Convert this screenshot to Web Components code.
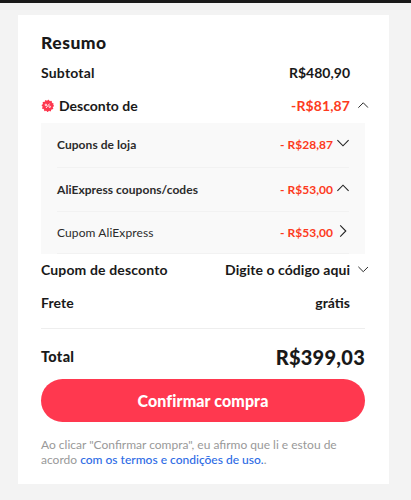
<!DOCTYPE html>
<html lang="pt-BR">
<head>
<meta charset="utf-8">
<title>Resumo</title>
<style>
  body {
    margin: 0;
    background: #f3f3f3;
    color: #191919;
    font-family: Lato, "Liberation Sans", sans-serif;
  }
</style>
</head>
<body>
<order-summary></order-summary>

<script>
const chevron = document.createElement('template')
chevron.innerHTML = `
  <style>
    :host {
      display: block;
      width: 12px;
      height: 12px;
      color: #222;
    }

    :host([direction="up"]) svg {
      transform: rotate(180deg);
    }

    :host([direction="right"]) svg {
      transform: rotate(-90deg);
    }

    svg {
      display: block;
      width: 100%;
      height: 100%;
    }
  </style>
  <svg viewBox="0 0 12 12" fill="none" stroke="currentColor" stroke-width="1.1">
    <path d="M.4 3.2 6 8.8 11.6 3.2"/>
  </svg>
`

customElements.define('chevron-icon',
  class extends HTMLElement {
    constructor () {
      super()
      this.attachShadow({ mode: 'open' }).appendChild(chevron.content.cloneNode(true))
    }
  }
)

const discountBadge = document.createElement('template')
discountBadge.innerHTML = `
  <style>
    :host {
      display: block;
      width: 13px;
      height: 13px;
    }

    svg {
      display: block;
    }
  </style>
  <svg width="13" height="13" viewBox="0 0 13 13">
    <circle cx="6.8" cy="6.8" r="5.4" fill="#fd384f"/>
    <circle cx="6.8" cy="6.8" r="5.3" fill="none" stroke="#fd384f" stroke-width="1.7" stroke-linecap="round" stroke-dasharray="0.01 2.765"/>
    <g fill="none" stroke="#fff" stroke-width=".9">
      <path d="M8.6 4.6 5 9"/>
      <circle cx="4.9" cy="5.9" r=".8"/>
      <circle cx="8.7" cy="7.7" r=".8"/>
    </g>
  </svg>
`

customElements.define('discount-badge',
  class extends HTMLElement {
    constructor () {
      super()
      this.attachShadow({ mode: 'open' }).appendChild(discountBadge.content.cloneNode(true))
    }
  }
)

const summaryRow = document.createElement('template')
summaryRow.innerHTML = `
  <style>
    :host {
      display: flex;
      align-items: center;
      height: 33px;
      font-size: 14px;
      font-weight: 700;
      line-height: 20px;
      white-space: nowrap;
    }

    .label {
      flex: 1;
      display: flex;
      align-items: center;
      gap: 5px;
      letter-spacing: var(--label-spacing, 0);
    }

    .value {
      color: var(--value-color, inherit);
      letter-spacing: var(--value-spacing, 0);
    }

    .end {
      width: 15px;
    }

    ::slotted([slot="end"]) {
      width: 10.5px;
      height: 10.5px;
      margin-left: 7.5px;
    }
  </style>
  <div class="label"><slot name="start"></slot><slot></slot></div>
  <div class="value"><slot name="value"></slot></div>
  <div class="end"><slot name="end"></slot></div>
`

customElements.define('summary-row',
  class extends HTMLElement {
    constructor () {
      super()
      this.attachShadow({ mode: 'open' }).appendChild(summaryRow.content.cloneNode(true))
    }
  }
)

const couponRow = document.createElement('template')
couponRow.innerHTML = `
  <style>
    :host {
      display: flex;
      align-items: center;
      box-sizing: border-box;
      border-bottom: 1px solid #f2f2f2;
      font-size: 12px;
      font-weight: 700;
      line-height: 18px;
      color: #2b2b2b;
      white-space: nowrap;
    }

    .label {
      flex: 1;
      font-weight: var(--label-weight, 700);
      letter-spacing: var(--label-spacing, .06px);
    }

    .value {
      color: #fd3a20;
      letter-spacing: .03px;
    }

    ::slotted([slot="end"]) {
      margin: 0 0 4px 4px;
    }
  </style>
  <div class="label"><slot></slot></div>
  <div class="value"><slot name="value"></slot></div>
  <slot name="end"></slot>
`

customElements.define('coupon-row',
  class extends HTMLElement {
    constructor () {
      super()
      this.attachShadow({ mode: 'open' }).appendChild(couponRow.content.cloneNode(true))
    }
  }
)

const confirmButton = document.createElement('template')
confirmButton.innerHTML = `
  <style>
    :host {
      display: block;
    }

    button {
      display: block;
      width: 100%;
      height: 43px;
      padding: 0;
      border: 0;
      border-radius: 22px;
      background: #ff384f;
      color: #fff;
      font: 900 16px/42px Lato, "Liberation Sans", sans-serif;
      letter-spacing: .1px;
    }
  </style>
  <button type="button"><slot></slot></button>
`

customElements.define('confirm-button',
  class extends HTMLElement {
    constructor () {
      super()
      this.attachShadow({ mode: 'open' }).appendChild(confirmButton.content.cloneNode(true))
    }
  }
)

const summary = document.createElement('template')
summary.innerHTML = `
  <style>
    :host {
      display: block;
      box-sizing: border-box;
      height: 500px;
      border-top: 3px solid #191919;
      padding: 12px 22.5px 0 17.5px;
    }

    .card {
      box-sizing: border-box;
      height: 469px;
      padding: 16px 23.5px 0;
      background: #fff;
    }

    h2 {
      margin: 0;
      font-size: 17.5px;
      font-weight: 900;
      line-height: 24px;
      padding-bottom: 1px;
      letter-spacing: .5px;
    }

    .discount {
      --value-color: #fd3a20;
      --value-spacing: .1px;
    }

    .coupons {
      display: grid;
      grid-template-rows: 45px 44px 42px;
      margin: 1px 0 -1px;
      padding: 0 16px;
      background: #f9f9f9;
    }

    .total {
      display: flex;
      align-items: center;
      justify-content: space-between;
      box-sizing: border-box;
      height: 51px;
      margin-top: 9px;
      padding-top: 5px;
      border-top: 1px solid #eee;
      font-size: 14.5px;
      font-weight: 900;
      letter-spacing: .3px;
    }

    .total strong {
      font-size: 20px;
      font-weight: 900;
      letter-spacing: .25px;
    }

    p {
      margin: 15px 0 0;
      color: #999;
      font-size: 12px;
      line-height: 15px;
      white-space: nowrap;
    }

    .line {
      display: block;
    }

    a {
      color: #2c6be5;
      font-weight: 500;
      text-decoration: none;
    }
  </style>
  <section class="card">
    <h2>Resumo</h2>
    <summary-row style="--label-spacing: .2px">Subtotal<span slot="value">R$480,90</span></summary-row>
    <summary-row class="discount">
      <discount-badge slot="start"></discount-badge>Desconto de
      <span slot="value">-R$81,87</span>
      <chevron-icon slot="end" direction="up"></chevron-icon>
    </summary-row>
    <div class="coupons">
      <coupon-row>Cupons de loja<span slot="value">- R$28,87</span><chevron-icon slot="end"></chevron-icon></coupon-row>
      <coupon-row>AliExpress coupons/codes<span slot="value">- R$53,00</span><chevron-icon slot="end" direction="up"></chevron-icon></coupon-row>
      <coupon-row style="--label-weight: 400; --label-spacing: .1px">Cupom AliExpress<span slot="value">- R$53,00</span><chevron-icon slot="end" direction="right"></chevron-icon></coupon-row>
    </div>
    <summary-row style="--label-spacing: .14px; --value-spacing: .05px">Cupom de desconto<span slot="value">Digite o código aqui</span><chevron-icon slot="end"></chevron-icon></summary-row>
    <summary-row style="--label-spacing: .1px">Frete<span slot="value">grátis</span></summary-row>
    <div class="total"><span>Total</span><strong>R$399,03</strong></div>
    <confirm-button>Confirmar compra</confirm-button>
    <p><span class="line">Ao clicar "Confirmar compra", eu afirmo que li e estou de</span><span class="line">acordo <a>com os termos e condições de uso.</a>.</span></p>
  </section>
`

customElements.define('order-summary',
  class extends HTMLElement {
    constructor () {
      super()
      this.attachShadow({ mode: 'open' }).appendChild(summary.content.cloneNode(true))
    }
  }
)
</script>
</body>
</html>
